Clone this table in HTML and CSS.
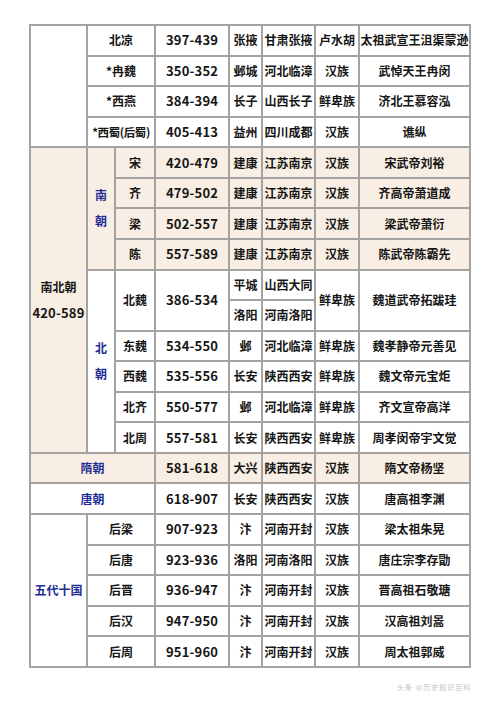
FILE: index.html
```html
<!DOCTYPE html>
<html lang="zh">
<head>
<meta charset="utf-8">
<link rel="stylesheet" href="styles.css">
</head>
<body>
<div class="page">
<table class="dyn">
<colgroup>
<col class="ca"><col class="cb"><col class="cc"><col class="cd"><col class="ce"><col class="cf"><col class="cg"><col class="ch">
</colgroup>
<tbody>
<tr><td rowspan="4"></td><td colspan="2">北凉</td><td class="yr">397-439</td><td>张掖</td><td>甘肃张掖</td><td>卢水胡</td><td>太祖武宣王沮渠蒙逊</td></tr>
<tr><td colspan="2">*冉魏</td><td class="yr">350-352</td><td>邺城</td><td>河北临漳</td><td>汉族</td><td>武悼天王冉闵</td></tr>
<tr><td colspan="2">*西燕</td><td class="yr">384-394</td><td>长子</td><td>山西长子</td><td>鲜卑族</td><td>济北王慕容泓</td></tr>
<tr><td colspan="2" class="narrow">*西蜀(后蜀)</td><td class="yr">405-413</td><td>益州</td><td>四川成都</td><td>汉族</td><td>谯纵</td></tr>

<tr class="tint"><td rowspan="10" class="tint tall">南北朝<br><span class="yr">420-589</span></td><td rowspan="4" class="blue tall">南<br>朝</td><td>宋</td><td class="yr">420-479</td><td>建康</td><td>江苏南京</td><td>汉族</td><td>宋武帝刘裕</td></tr>
<tr class="tint"><td>齐</td><td class="yr">479-502</td><td>建康</td><td>江苏南京</td><td>汉族</td><td>齐高帝萧道成</td></tr>
<tr class="tint"><td>梁</td><td class="yr">502-557</td><td>建康</td><td>江苏南京</td><td>汉族</td><td>梁武帝萧衍</td></tr>
<tr class="tint"><td>陈</td><td class="yr">557-589</td><td>建康</td><td>江苏南京</td><td>汉族</td><td>陈武帝陈霸先</td></tr>

<tr><td rowspan="6" class="blue tall white">北<br>朝</td><td rowspan="2">北魏</td><td rowspan="2" class="yr">386-534</td><td>平城</td><td>山西大同</td><td rowspan="2">鲜卑族</td><td rowspan="2">魏道武帝拓跋珪</td></tr>
<tr><td>洛阳</td><td>河南洛阳</td></tr>
<tr><td>东魏</td><td class="yr">534-550</td><td>邺</td><td>河北临漳</td><td>鲜卑族</td><td>魏孝静帝元善见</td></tr>
<tr><td>西魏</td><td class="yr">535-556</td><td>长安</td><td>陕西西安</td><td>鲜卑族</td><td>魏文帝元宝炬</td></tr>
<tr><td>北齐</td><td class="yr">550-577</td><td>邺</td><td>河北临漳</td><td>鲜卑族</td><td>齐文宣帝高洋</td></tr>
<tr><td>北周</td><td class="yr">557-581</td><td>长安</td><td>陕西西安</td><td>鲜卑族</td><td>周孝闵帝宇文觉</td></tr>

<tr class="tint"><td colspan="3" class="blue">隋朝</td><td class="yr">581-618</td><td>大兴</td><td>陕西西安</td><td>汉族</td><td>隋文帝杨坚</td></tr>
<tr><td colspan="3" class="blue">唐朝</td><td class="yr">618-907</td><td>长安</td><td>陕西西安</td><td>汉族</td><td>唐高祖李渊</td></tr>

<tr><td rowspan="5" class="blue">五代十国</td><td colspan="2">后梁</td><td class="yr">907-923</td><td>汴</td><td>河南开封</td><td>汉族</td><td>梁太祖朱晃</td></tr>
<tr><td colspan="2">后唐</td><td class="yr">923-936</td><td>洛阳</td><td>河南洛阳</td><td>汉族</td><td>唐庄宗李存勖</td></tr>
<tr><td colspan="2">后晋</td><td class="yr">936-947</td><td>汴</td><td>河南开封</td><td>汉族</td><td>晋高祖石敬瑭</td></tr>
<tr><td colspan="2">后汉</td><td class="yr">947-950</td><td>汴</td><td>河南开封</td><td>汉族</td><td>汉高祖刘暠</td></tr>
<tr><td colspan="2">后周</td><td class="yr">951-960</td><td>汴</td><td>河南开封</td><td>汉族</td><td>周太祖郭威</td></tr>
</tbody>
</table>
<div class="mark">头条 @历史知识百科</div>
</div>
</body>
</html>
```

FILE: styles.css
```css
html, body {
  margin: 0;
  padding: 0;
  background: #ffffff;
}

.page {
  width: 500px;
  height: 708px;
  padding: 24px 0 0 29px;
  box-sizing: border-box;
  font-family: "Noto Sans CJK SC", "Noto Sans", sans-serif;
  font-weight: 700;
  color: #161616;
}

.dyn {
  border-collapse: collapse;
  table-layout: fixed;
  width: 442px;
}

.ca { width: 57px; }
.cb { width: 28px; }
.cc { width: 40px; }
.cd { width: 74px; }
.ce { width: 33px; }
.cf { width: 53px; }
.cg { width: 44px; }
.ch { width: 111px; }

.dyn tr {
  height: 30.57px;
}

.dyn td {
  border: 2px solid #a3a3a3;
  padding: 0;
  text-align: center;
  vertical-align: middle;
  font-size: 12px;
  line-height: 14px;
  white-space: nowrap;
  overflow: hidden;
  background: #ffffff;
}

.dyn tr.tint td,
.dyn td.tint {
  background: #f8eee3;
}

.dyn tr.tint td.white,
.dyn td.white {
  background: #ffffff;
}

.dyn td.yr,
.dyn .yr {
  font-size: 13px;
  letter-spacing: 0.2px;
}

.dyn td.narrow {
  font-size: 11.5px;
  letter-spacing: -0.4px;
}

.dyn td.tall {
  line-height: 26px;
}

.dyn td.blue {
  color: #1f2e94;
}

.mark {
  margin: 15px 0 0 368px;
  font-size: 7px;
  line-height: 8px;
  font-weight: 400;
  color: #c4c4c4;
  letter-spacing: 1px;
}
```
